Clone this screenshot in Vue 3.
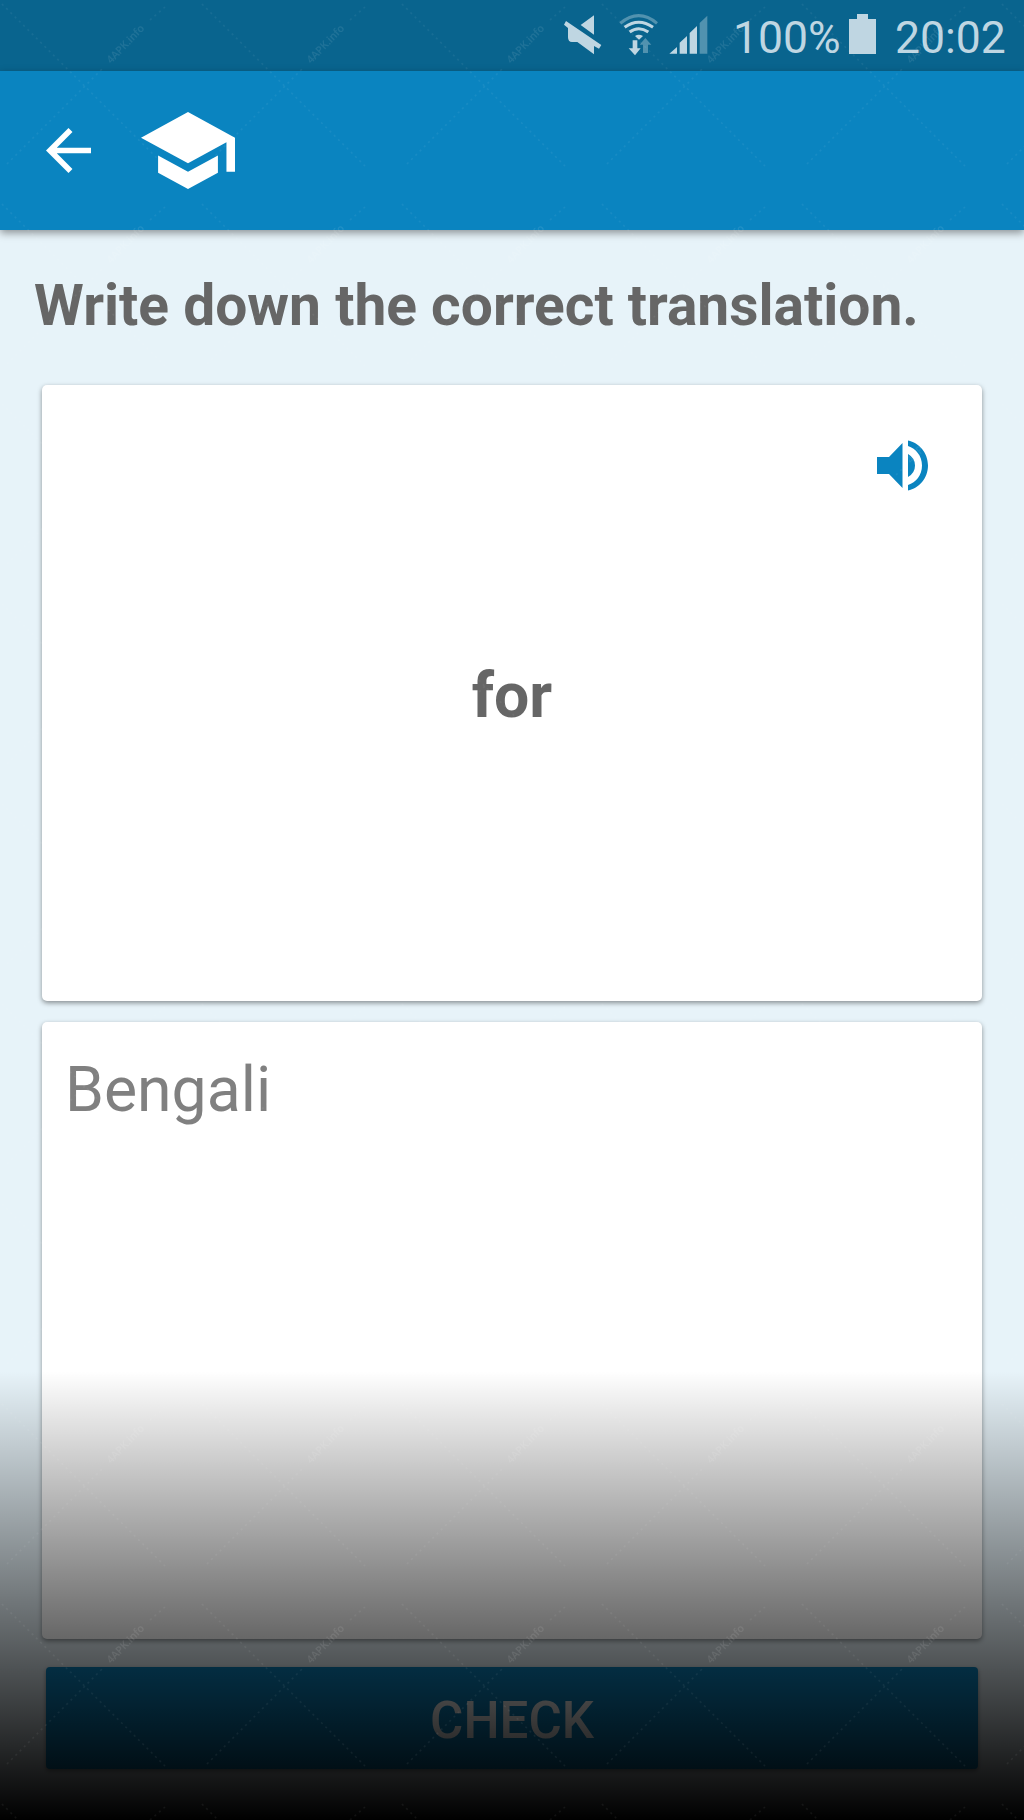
<template>
  <div class="screen">
    <!-- status bar -->
    <div class="status">
      <svg class="mute" viewBox="69 42 117 126">
        <path d="M162 46V104L122 75ZM78 63L184 135L177 146L162 138V163L112 126H96Q84 126 84 112V84L72 74Z" />
      </svg>
      <svg class="wifi" viewBox="234 36 123 132">
        <g class="arcs">
          <path class="dim" d="M241 70Q296 24 351 70" />
          <path d="M254 82Q296 52 339 82" />
          <path d="M269 96Q296 76 325 96" />
        </g>
        <path d="M285 108Q296 100 309 108L297 119Z" />
        <path d="M278 121H292V145H302L285 166L266 145H278Z" />
        <path class="dim" d="M316 114L334 134H324V159H309V134H299Z" />
      </svg>
      <svg class="signal" viewBox="387 42 120 126">
        <path d="M388 161L411 141V161ZM419 128L441 108V161H419ZM449 99L471 78V161H449Z" />
        <path class="dim" d="M479 69L502 47V161H479Z" />
      </svg>
      <span class="percent">100%</span>
      <svg class="battery" viewBox="0 0 27 40">
        <path d="M8 0H19V5H27V40H0V5H8Z" />
      </svg>
      <span class="time">{{ time }}</span>
    </div>

    <!-- toolbar -->
    <header class="toolbar">
      <svg class="back" viewBox="4 4 16 16">
        <path d="M20 11H7.83l5.59-5.59L12 4l-8 8 8 8 1.41-1.41L7.83 13H20v-2z" />
      </svg>
      <svg class="cap" viewBox="1 3 22 18">
        <path d="M5 13.18v4L12 21l7-3.82v-4L12 17l-7-3.82zM12 3L1 9l11 6 9-4.91V17h2V9L12 3z" />
      </svg>
    </header>

    <main>
      <h1>Write down the correct translation.</h1>
      <section class="card word">
        <svg class="speaker" viewBox="0 0 52 51">
          <path d="M0 17H12L25.500 3V48L12 34H0ZM31 14Q38 18 38 25.500T31 37Z" />
          <path d="M31 0.500C42 2.500 51 13 51 25.500S42 48.500 31 50.500V45C39 42.500 45 35 45 25.500S39 8.500 31 6Z" />
        </svg>
        <b>{{ word }}</b>
      </section>
      <textarea v-model="answer" class="card answer" placeholder="Bengali"></textarea>
      <button class="check">CHECK</button>
    </main>

    <div class="shade"></div>
    <svg class="marks" width="1024" height="1820">
      <defs>
        <pattern id="mark" width="200" height="200" patternUnits="userSpaceOnUse">
          <path d="M2 4L165 166M7 164L103 68M150 20L165 7" />
          <text transform="translate(111 64) rotate(-46)">4APK.info</text>
        </pattern>
      </defs>
      <rect width="1024" height="1820" fill="url(#mark)" />
    </svg>
  </div>
</template>

<script setup>
import { ref } from "vue";

const time = ref("20:02");
const word = ref("for");
// user's translation
const answer = ref("");
</script>

<style>
body {
  margin: 0;
}
</style>

<style scoped>
.screen {
  position: relative;
  width: 1024px;
  height: 1820px;
  display: flex;
  flex-direction: column;
  overflow: hidden;
  background-color: #e7f3f9;
  font-family: Roboto, sans-serif;
  color: #666;
}

svg {
  display: block;
  flex-shrink: 0;
}

.status {
  height: 71px;
  display: flex;
  align-items: flex-start;
  box-sizing: border-box;
  padding-left: 563px;
  background-color: #09648e;
  color: #bfd6e2;
  fill: #bfd6e2;
  font-size: 44.5px;
  font-weight: 400;
  line-height: 54px;
  white-space: nowrap;

  .mute {
    width: 39px;
    height: 42px;
    margin-top: 14px;
  }

  .wifi {
    width: 41px;
    height: 44px;
    margin: 12px 0 0 16px;
  }

  .arcs {
    fill: none;
    stroke: #bfd6e2;
    stroke-width: 9;
  }

  .dim {
    opacity: 0.4;
  }

  .signal {
    width: 40px;
    height: 42px;
    margin: 14px 0 0 10px;
  }

  .percent {
    width: 116px;
    margin: 11px 0 0 24px;
  }

  .battery {
    width: 27px;
    height: 40px;
    margin-top: 14px;
  }

  .time {
    margin: 11px 0 0 19px;
  }
}

.toolbar {
  height: 159px;
  display: flex;
  align-items: center;
  box-sizing: border-box;
  padding: 0 0 1px 46px;
  gap: 50px;
  background-color: #0a84c0;
  fill: white;
  box-shadow: 0 3px 8px rgba(0, 0, 0, 0.4);
  z-index: 1;

  .back {
    width: 45px;
    height: 45px;
    margin-top: 1px;
  }

  .cap {
    width: 94px;
    height: 77px;
  }
}

main {
  flex: 1;
  display: flex;
  flex-direction: column;
  padding: 42px 42px 0;
}

h1 {
  height: 113px;
  margin: 0 0 0 -8px;
  font-size: 56.9px;
  line-height: 67px;
  font-weight: bold;
  white-space: nowrap;
}

.card {
  box-sizing: border-box;
  width: 940px;
  height: 616px;
  border-radius: 5px;
  background-color: white;
  box-shadow: 0 2px 5px rgba(0, 0, 0, 0.42);
}

.word {
  display: flex;
  flex-direction: column;
  align-items: center;
  font-size: 62.5px;
  line-height: 73px;

  .speaker {
    width: 52px;
    height: 51px;
    margin: 55px 53px 0 0;
    align-self: flex-end;
    fill: #0a84c0;
  }

  b {
    margin-top: 168px;
  }
}

.answer {
  display: block;
  height: 617px;
  margin-top: 21px;
  padding: 31px 23px;
  border: none;
  outline: none;
  resize: none;
  color: #666;
  font-family: Roboto, sans-serif;
  font-size: 62.5px;
  line-height: 73px;
}

.answer::placeholder {
  color: #808080;
  opacity: 1;
}

.check {
  width: 932px;
  height: 102px;
  margin: 28px 4px 0;
  padding: 4px 0 0;
  border: none;
  border-radius: 4px;
  background-color: #0a84c0;
  box-shadow: 0 2px 4px rgba(0, 0, 0, 0.4);
  color: white;
  font-family: Roboto, sans-serif;
  font-size: 51px;
  font-weight: 500;
}

/* darkens the bottom of the screen */
.shade {
  position: absolute;
  left: 0;
  right: 0;
  bottom: 0;
  height: 449px;
  background: linear-gradient(transparent, black);
  pointer-events: none;
  z-index: 2;
}

.marks {
  position: absolute;
  top: 0;
  left: 0;
  z-index: 3;
  pointer-events: none;

  path {
    fill: none;
    stroke: white;
    stroke-opacity: 0.06;
    stroke-width: 1.5;
    stroke-dasharray: 2 4;
  }

  text {
    fill: white;
    fill-opacity: 0.09;
    font: 600 10.5px "Open Sans", sans-serif;
  }
}
</style>
